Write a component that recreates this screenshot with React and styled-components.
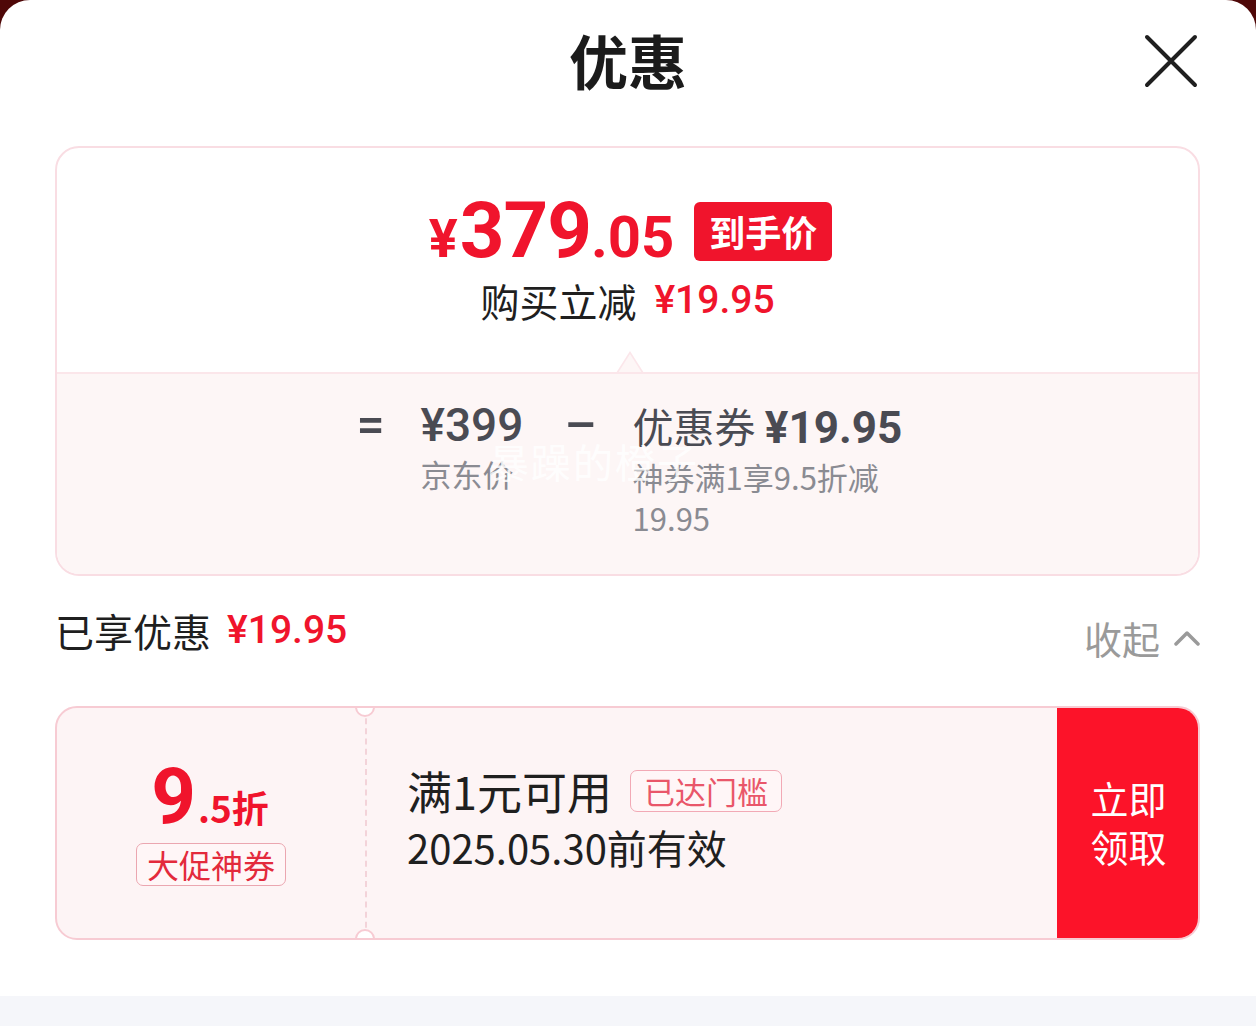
import React from 'react';
import styled, { createGlobalStyle } from 'styled-components';

const GlobalStyle = createGlobalStyle`
  html, body {
    margin: 0;
    padding: 0;
    background: #4f0808;
  }
  body {
    font-family: 'Noto Sans CJK SC', 'Noto Sans', sans-serif;
    color: #1f1f1f;
  }
`;

const RED = '#f0142c';
const NUM = "Roboto, 'Noto Sans CJK SC', sans-serif";

const Sheet = styled.div`
  width: 1256px;
  height: 1026px;
  background: #ffffff;
  border-radius: 30px 30px 0 0;
  display: flex;
  flex-direction: column;
  overflow: hidden;
`;

const Header = styled.div`
  height: 146px;
  display: flex;
  justify-content: center;
  position: relative;
`;

const Title = styled.h1`
  margin: 24px 0 0;
  font-size: 59px;
  line-height: 72px;
  font-weight: 700;
  color: #1b1b1b;
`;

const CloseBtn = styled.button`
  position: absolute;
  right: 58px;
  top: 34px;
  width: 54px;
  height: 54px;
  padding: 0;
  border: none;
  background: none;
`;

const Content = styled.div`
  flex: 1;
  padding: 0 56px 0 55px;
  display: flex;
  flex-direction: column;
`;

const Card = styled.div`
  border: 2px solid #f9dde3;
  border-radius: 24px;
  overflow: hidden;
  display: flex;
  flex-direction: column;
`;

const CardTop = styled.div`
  height: 224px;
  display: flex;
  flex-direction: column;
  align-items: center;
  position: relative;
`;

const PriceRow = styled.div`
  margin-top: 44px;
  display: flex;
  align-items: baseline;
  color: ${RED};
  font-family: ${NUM};
  font-weight: 700;
  height: 78px;
  padding-left: 6px;
`;

const PriceSmall = styled.span`
  font-size: ${(p) => p.size || 56}px;
  line-height: 78px;
`;

const PriceBig = styled.span`
  font-size: 78px;
  line-height: 78px;
  letter-spacing: -1px;
  margin-left: 2px;
`;

const Badge = styled.span`
  align-self: center;
  margin-left: 20px;
  background: ${RED};
  color: #fff;
  font-family: 'Noto Sans CJK SC', sans-serif;
  font-size: 36px;
  line-height: 59px;
  height: 59px;
  padding: 0 15px;
  border-radius: 6px;
  font-weight: 700;
`;

const SubRow = styled.div`
  margin-top: 5px;
  display: flex;
  align-items: center;
  gap: 18px;
  font-size: 39px;
  line-height: 50px;
`;

const RedNum = styled.span`
  color: ${RED};
  font-family: ${NUM};
  font-weight: 500;
  font-size: ${(p) => p.size || 38}px;
`;

const Notch = styled.div`
  position: absolute;
  left: 50%;
  bottom: -1px;
  margin-left: -12px;
  width: 0;
  height: 0;
  border-left: 14px solid transparent;
  border-right: 14px solid transparent;
  border-bottom: 22px solid #fbe6ea;
  &::after {
    content: '';
    position: absolute;
    left: -12px;
    top: 3px;
    border-left: 12px solid transparent;
    border-right: 12px solid transparent;
    border-bottom: 19px solid #fdf6f6;
  }
`;

const CardBottom = styled.div`
  height: 202px;
  background: #fdf6f6;
  border-top: 2px solid #fbe6ea;
  display: flex;
  justify-content: center;
  gap: 36px;
  padding-top: 23px;
  box-sizing: border-box;
  position: relative;
  color: #4a4b53;
`;

const Op = styled.div`
  font-family: ${NUM};
  font-size: ${(p) => p.size || 46}px;
  line-height: 56px;
  font-weight: 500;
  color: #4a4b53;
`;

const Col = styled.div`
  display: flex;
  flex-direction: column;
  width: ${(p) => p.width}px;
`;

const ColHead = styled.div`
  font-size: 41px;
  line-height: 56px;
  white-space: nowrap;
  color: #4a4b53;
`;

const HeadNum = styled.span`
  font-family: ${NUM};
  font-weight: 700;
  font-size: 44px;
`;

const ColNote = styled.div`
  font-size: 31px;
  line-height: 41px;
  color: #8a8b92;
`;

const Watermark = styled.div`
  position: absolute;
  left: 432px;
  top: 62px;
  font-size: 40px;
  line-height: 50px;
  color: rgba(255, 255, 255, 0.85);
  letter-spacing: 2px;
  pointer-events: none;
`;

const SavedRow = styled.div`
  height: 130px;
  display: flex;
  justify-content: space-between;
  align-items: flex-start;
`;

const SavedText = styled.div`
  margin-top: 28px;
  font-size: 39px;
  line-height: 52px;
  display: flex;
  gap: 16px;
  color: #1f1f1f;
`;

const Collapse = styled.div`
  margin-top: 36px;
  display: flex;
  align-items: center;
  gap: 14px;
  font-size: 38px;
  line-height: 52px;
  color: #9a9a9a;
`;

const Coupon = styled.div`
  height: 234px;
  display: flex;
  border: 2px solid #f7cbd3;
  border-radius: 22px;
  background: #fdf4f5;
  position: relative;
  box-sizing: border-box;
  overflow: hidden;
`;

const CouponLeft = styled.div`
  width: 308px;
  display: flex;
  flex-direction: column;
  align-items: center;
  justify-content: center;
  border-right: 2px dashed #f3d3d9;
`;

const Discount = styled.div`
  display: flex;
  align-items: baseline;
  color: ${RED};
  font-family: ${NUM};
  font-weight: 700;
  line-height: 72px;
  margin-right: 2px;
`;

const DiscountBig = styled.span`
  font-size: 78px;
`;

const DiscountSmall = styled.span`
  font-size: 37px;
  margin-left: 2px;
  font-family: 'Noto Sans CJK SC', sans-serif;
`;

const Tag = styled.span`
  display: inline-block;
  border: 1.5px solid ${(p) => p.border};
  color: ${(p) => p.color};
  border-radius: 7px;
  font-size: ${(p) => p.size}px;
  line-height: ${(p) => p.h}px;
  padding: 0 ${(p) => p.pad}px;
  background: #fff6f7;
`;

const CouponMid = styled.div`
  flex: 1;
  padding-left: 40px;
  display: flex;
  flex-direction: column;
  justify-content: center;
  gap: 2px;
  padding-bottom: 8px;
`;

const MidLine = styled.div`
  display: flex;
  align-items: center;
  gap: 18px;
  font-size: ${(p) => p.size}px;
  line-height: 54px;
  color: #1f1f1f;
`;

const TakeBtn = styled.button`
  width: 143px;
  border: none;
  background: #fc1329;
  color: #fff;
  font-family: 'Noto Sans CJK SC', sans-serif;
  font-size: 38px;
  line-height: 48px;
  padding: 0 0 2px;
  margin: -2px -2px -2px 0;
`;

const Hole = styled.div`
  position: absolute;
  left: 298px;
  ${(p) => (p.bottom ? 'bottom: -11px;' : 'top: -11px;')}
  width: 20px;
  height: 20px;
  border-radius: 50%;
  background: #fff;
  border: 2px solid #f7cbd3;
  box-sizing: border-box;
`;

const Footer = styled.div`
  height: 30px;
  background: #f5f6fa;
`;

export default function App() {
  return (
    <>
      <GlobalStyle />
      <Sheet>
        <Header>
          <Title>优惠</Title>
          <CloseBtn aria-label="close">
            <svg width="54" height="54" viewBox="0 0 54 54">
              <path d="M3 3 L51 51 M51 3 L3 51" stroke="#1f1f1f" strokeWidth="4" strokeLinecap="round" />
            </svg>
          </CloseBtn>
        </Header>
        <Content>
          <Card>
            <CardTop>
              <PriceRow>
                <PriceSmall size={54}>¥</PriceSmall>
                <PriceBig>379</PriceBig>
                <PriceSmall size={58}>.05</PriceSmall>
                <Badge>到手价</Badge>
              </PriceRow>
              <SubRow>
                <span>购买立减</span>
                <RedNum size={39}>¥19.95</RedNum>
              </SubRow>
              <Notch />
            </CardTop>
            <CardBottom>
              <Op size={50}>=</Op>
              <Col width={108}>
                <Op>¥399</Op>
                <ColNote>京东价</ColNote>
              </Col>
              <Op size={50}>–</Op>
              <Col width={266}>
                <ColHead>
                  优惠券 <HeadNum>¥19.95</HeadNum>
                </ColHead>
                <ColNote>
                  神券满1享9.5折减
                  <br />
                  19.95
                </ColNote>
              </Col>
              <Watermark>暴躁的橙子</Watermark>
            </CardBottom>
          </Card>
          <SavedRow>
            <SavedText>
              <span>已享优惠</span>
              <RedNum size={39}>¥19.95</RedNum>
            </SavedText>
            <Collapse>
              <span>收起</span>
              <svg width="26" height="16" viewBox="0 0 26 16">
                <path d="M2 14 L13 3 L24 14" fill="none" stroke="#9a9a9a" strokeWidth="3.5" strokeLinecap="round" strokeLinejoin="round" />
              </svg>
            </Collapse>
          </SavedRow>
          <Coupon>
            <CouponLeft>
              <Discount>
                <DiscountBig>9</DiscountBig>
                <DiscountSmall>.5折</DiscountSmall>
              </Discount>
              <Tag border="#eba6b0" color="#e32a3c" size={32} h={41} pad={10}>
                大促神券
              </Tag>
            </CouponLeft>
            <CouponMid>
              <MidLine size={45}>
                <span>满1元可用</span>
                <Tag border="#f2a9b5" color="#e9566a" size={31} h={40} pad={13}>
                  已达门槛
                </Tag>
              </MidLine>
              <MidLine size={40}>2025.05.30前有效</MidLine>
            </CouponMid>
            <TakeBtn>
              立即
              <br />
              领取
            </TakeBtn>
            <Hole />
            <Hole bottom />
          </Coupon>
        </Content>
        <Footer />
      </Sheet>
    </>
  );
}
